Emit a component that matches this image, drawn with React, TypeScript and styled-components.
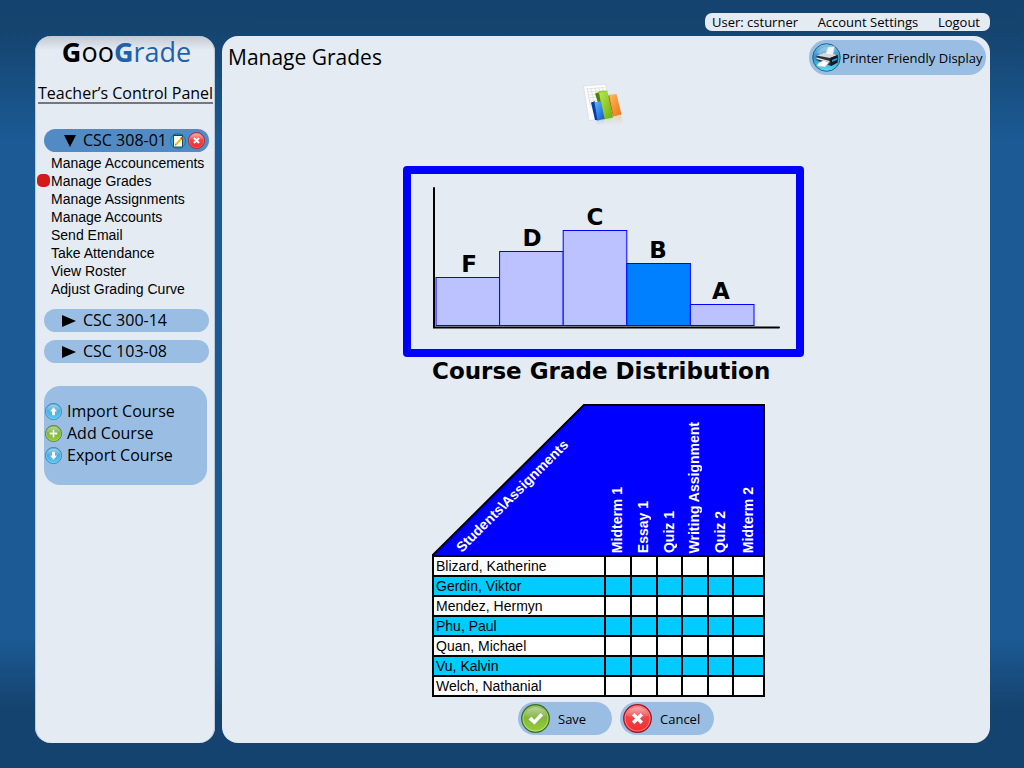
import React from "react";
import styled, { createGlobalStyle } from "styled-components";

const GlobalStyle = createGlobalStyle`
  * { box-sizing: border-box; }
  body {
    margin: 0;
    color: #000;
    font-family: "Open Sans", "Noto Sans", sans-serif;
    background: #15436f;
  }
  a { color: inherit; text-decoration: none; }
  button {
    margin: 0;
    padding: 0;
    border: 0;
    background: none;
    color: inherit;
    font: inherit;
    cursor: pointer;
  }
  svg { display: block; flex: none; }
`;

const Page = styled.div`
  display: flex;
  flex-direction: column;
  gap: 5px;
  min-height: 100vh;
  padding: 13px 34px 25px 35px;
  background: linear-gradient(
    to bottom,
    #15436f 0,
    #15446f 30px,
    #1b5a94 140px,
    #1b5a94 calc(100% - 130px),
    #15436f calc(100% - 60px)
  );
`;

const UserBar = styled.nav`
  display: flex;
  align-self: flex-end;
  justify-content: space-between;
  align-items: center;
  width: 285px;
  height: 18px;
  padding: 0 10px 0 7px;
  border-radius: 7px;
  background: #e5ebf3;
  font-size: 13px;
  line-height: 18px;
`;

const Columns = styled.div`
  display: flex;
  flex: 1;
  gap: 7px;
`;

const Sidebar = styled.aside`
  flex: none;
  width: 180px;
  padding: 0 6px 16px 9px;
  border-radius: 16px;
  background: linear-gradient(to bottom, #c4c9d1 0, #e5ebf3 14px);
  box-shadow: inset 1px 0 #b9c9dc, inset -1px 0 #b9c9dc;
`;

const Logo = styled.div`
  height: 34px;
  font-size: 27px;
  line-height: 32px;
  text-align: center;
`;

const LogoTail = styled.span`
  color: #1f62a8;
`;

const PanelTitle = styled.h2`
  width: max-content;
  margin: 15px -6px 25px;
  border-bottom: 2px solid #75777d;
  font-size: 16px;
  font-weight: 400;
  line-height: 17px;
`;

const CoursePill = styled.div<{ $open?: boolean }>`
  display: flex;
  align-items: center;
  gap: 2px;
  height: 23px;
  margin-bottom: ${(p) => (p.$open ? "2px" : "8px")};
  padding: 0 4px 0 18px;
  border-radius: 12px;
  background: ${(p) => (p.$open ? "#528bc4" : "#9abee3")};
`;

const CourseToggle = styled.button`
  display: flex;
  flex: 1;
  align-items: center;
  gap: 7px;
  font-size: 16px;
  line-height: 23px;
  white-space: nowrap;
`;

const CourseMenu = styled.ul`
  margin: 0 0 11px;
  padding: 0 0 0 7px;
  list-style: none;
  font-family: "Liberation Sans", Arial, sans-serif;
  font-size: 14px;
  line-height: 18px;
  white-space: nowrap;
`;

const CourseMenuItem = styled.li<{ $current: boolean }>`
  position: relative;
  &::before {
    content: "";
    display: ${(p) => (p.$current ? "block" : "none")};
    position: absolute;
    top: 2px;
    left: -14px;
    width: 13px;
    height: 13px;
    border-radius: 5px;
    background: #d41a1a;
  }
`;

const ActionBox = styled.div`
  display: flex;
  flex-direction: column;
  align-items: flex-start;
  height: 99px;
  margin: 23px 2px 0 0;
  padding: 14px 1px;
  border-radius: 16px;
  background: #9abee3;
`;

const ActionButton = styled.button`
  display: flex;
  align-items: center;
  gap: 5px;
  height: 22px;
  font-size: 16px;
  line-height: 22px;
`;

const Main = styled.main`
  flex: 1;
  padding: 4px 4px 8px 6px;
  border-radius: 16px;
  background: #e5ebf3;
`;

const MainHeader = styled.header`
  display: flex;
  justify-content: space-between;
  height: 35px;
`;

const Title = styled.h1`
  margin: 0;
  font-size: 21px;
  font-weight: 400;
  line-height: 34px;
`;

const PillButton = styled.button<{ $wide?: boolean }>`
  display: flex;
  align-items: center;
  gap: ${(p) => (p.$wide ? "1px" : "8px")};
  width: ${(p) => (p.$wide ? "177px" : "94px")};
  height: ${(p) => (p.$wide ? "35px" : "33px")};
  padding-left: 3px;
  border-radius: 17px;
  background: #9abee3;
  font-size: 13px;
  line-height: 18px;
  white-space: nowrap;
`;

const Content = styled.div`
  width: 408px;
  margin: 8px auto 0;
  padding-right: 7px;
`;

const ReportIconRow = styled.div`
  display: flex;
  justify-content: center;
  margin-bottom: 33px;
`;

const ChartFigure = styled.figure`
  margin: 0;
`;

const ChartFrame = styled.div`
  border: 8px solid #0000ff;
  border-radius: 4px;
`;

const ChartCaption = styled.figcaption`
  padding-left: 29px;
  font-family: "DejaVu Sans", sans-serif;
  font-size: 23px;
  font-weight: 700;
  line-height: 28px;
  white-space: nowrap;
`;

const GradeTable = styled.table`
  width: 333px;
  margin: 19px 0 0 29px;
  border-collapse: separate;
  border-spacing: 0;
  table-layout: fixed;
  font-family: "Liberation Sans", Arial, sans-serif;
  font-size: 14px;
  line-height: 18px;
`;

const Col = styled.col<{ $width: number }>`
  width: ${(p) => p.$width}px;
`;

const CornerHead = styled.th`
  position: relative;
  height: 151px;
  padding: 0;
`;

const SlantLabel = styled.span`
  position: absolute;
  bottom: 0;
  left: 32px;
  color: #fff;
  line-height: 16px;
  white-space: nowrap;
  transform: rotate(-45deg);
  transform-origin: 0 100%;
`;

const AssignmentHead = styled.th`
  padding: 0 0 2px;
  border-top: 2px solid #000;
  background: #0000ff;
  color: #fff;
  vertical-align: bottom;
  &:last-child { border-right: 2px solid #000; }
`;

const VerticalLabel = styled.span`
  display: block;
  margin: 0 auto;
  width: 18px;
  line-height: 18px;
  text-align: left;
  white-space: nowrap;
  writing-mode: vertical-rl;
  transform: rotate(180deg);
`;

const StudentRow = styled.tr`
  background: #fff;
  &:nth-child(even) { background: #00ccff; }
  &:last-child > * { border-bottom: 2px solid #000; }
`;

const StudentName = styled.th`
  height: 20px;
  padding: 0 0 0 2px;
  border-top: 2px solid #000;
  border-left: 2px solid #000;
  font-weight: 400;
  text-align: left;
`;

const GradeCell = styled.td`
  padding: 0;
  border-top: 2px solid #000;
  border-left: 2px solid #000;
  &:last-child { border-right: 2px solid #000; }
`;

const FormActions = styled.div`
  display: flex;
  gap: 8px;
  margin: 5px 0 0 115px;
`;

const Triangle = ({ open }: { open?: boolean }) => (
  <svg width="14" height="14" viewBox="0 0 14 14" aria-hidden="true">
    <path d={open ? "M2 1h12L8 13z" : "M0 1v12l14-6z"} />
  </svg>
);

type Tone = "blue" | "green" | "red";
type Mark = "up" | "down" | "plus" | "check" | "cross";

const tones: Record<Tone, [string, string, string]> = {
  blue: ["#3f9ad2", "#58c8f5", "#2477a8"],
  green: ["#6da43a", "#96cf35", "#3f7020"],
  red: ["#f0575c", "#f52a2e", "#a01520"],
};

const marks: Record<Mark, string> = {
  up: "M14 7l6 7h-3.500v6h-5v-6H8z",
  down: "M14 21l6-7h-3.500V8h-5v6H8z",
  plus: "M12.500 7.500h3v5h5v3h-5v5h-3v-5h-5v-3h5z",
  check: "M7 15l3-3 3 3 6-6.500 2.500 2.500L13 20z",
  cross: "M8.500 11l2.500-2.500 3 3 3-3 2.500 2.500-3 3 3 3-2.500 2.500-3-3-3 3L8.500 17l3-3z",
};

const RoundIcon = ({ tone, mark, size }: { tone: Tone; mark: Mark; size: number }) => {
  const id = `${tone}-${mark}-${size}`;
  const [top, bottom, edge] = tones[tone];
  return (
    <svg width={size} height={size} viewBox="0 0 28 28" aria-hidden="true">
      <defs>
        <linearGradient id={id} x1="0" y1="0" x2="0" y2="1">
          <stop offset="0" stopColor={top} />
          <stop offset="1" stopColor={bottom} />
        </linearGradient>
        <linearGradient id={`${id}-shine`} x1="0" y1="0" x2="0" y2="1">
          <stop offset="0" stopColor="#fff" stopOpacity="0.5" />
          <stop offset="1" stopColor="#fff" stopOpacity="0.05" />
        </linearGradient>
      </defs>
      <circle cx="14" cy="14" r="13.300" fill={`url(#${id})`} stroke={edge} strokeWidth="1.200" />
      <circle cx="14" cy="14" r="12" fill="none" stroke="#fff" strokeOpacity="0.35" />
      <path d="M3 11A11.500 11.500 0 0 1 25 11Q14 16 3 11z" fill={`url(#${id}-shine)`} />
      <path d={marks[mark]} fill="#fff" stroke={edge} strokeOpacity="0.3" strokeWidth="0.600" />
    </svg>
  );
};

const EditIcon = () => (
  <svg width="16" height="16" viewBox="0 0 16 16" aria-hidden="true">
    <circle cx="8" cy="8" r="7.500" fill="#35a4c9" stroke="#1c6b93" strokeWidth="0.800" />
    <path d="M3.500 2.500h9v11.500h-9z" fill="#fbfdf0" stroke="#1c4d66" />
    <path d="M3.500 2.200h9" stroke="#23343c" strokeWidth="1.400" strokeDasharray="1 0.700" />
    <path d="M6 11.500L11.500 5.500" stroke="#f0c320" strokeWidth="2.200" />
    <path d="M11 6l1.500-1.600" stroke="#d4472c" strokeWidth="2.200" />
    <path d="M5 12.500l1.500-.400-1-1z" fill="#333" />
  </svg>
);

const PrinterIcon = () => (
  <svg width="29" height="29" viewBox="0 0 29 29" aria-hidden="true">
    <defs>
      <linearGradient id="printer-disc" x1="0" y1="0" x2="0" y2="1">
        <stop offset="0" stopColor="#8cc5ea" />
        <stop offset="0.500" stopColor="#2b92cc" />
        <stop offset="1" stopColor="#5be0f5" />
      </linearGradient>
    </defs>
    <circle cx="14.500" cy="14.500" r="13.800" fill="url(#printer-disc)" stroke="#1f6180" />
    <path d="M5 10a11 11 0 0 1 18-2L14 13z" fill="#fff" opacity="0.250" />
    <path d="M4.500 12.500L14 9l11.500 3v7.500L19 23 4.500 17z" fill="#2c3238" />
    <path d="M4.500 12.500L14 9l11.500 3L18 15z" fill="#d3d9de" />
    <path d="M18 15l7.500-3v7.500L19 23z" fill="#15191e" />
    <path d="M20 17l5-2v2l-5 2z" fill="#3d8fd0" />
    <path d="M13.500 11.500L16 4l6.500-.500-1.500 8.500z" fill="#f2f5f7" stroke="#b9c4cc" strokeWidth="0.500" />
    <path d="M4.500 14.500l13 3.500v1.500l-13-3.500z" fill="#e3e8ec" />
    <path d="M6.500 20l5-2.500 5.500 2-4 4.500-8-1z" fill="#fff" stroke="#aeb8c0" strokeWidth="0.500" />
  </svg>
);

const ReportIcon = () => (
  <svg width="42" height="50" viewBox="0 0 42 50" aria-hidden="true">
    <defs>
      <linearGradient id="bar-blue" x1="0" y1="0" x2="1" y2="1">
        <stop offset="0" stopColor="#61b9fa" />
        <stop offset="1" stopColor="#0a55d8" />
      </linearGradient>
      <linearGradient id="bar-green" x1="0" y1="0" x2="1" y2="1">
        <stop offset="0" stopColor="#b9ea4c" />
        <stop offset="1" stopColor="#6cab0c" />
      </linearGradient>
      <linearGradient id="bar-orange" x1="0" y1="0" x2="1" y2="1">
        <stop offset="0" stopColor="#ffba62" />
        <stop offset="1" stopColor="#ee7410" />
      </linearGradient>
      <linearGradient id="bar-fade" x1="0" y1="0" x2="0" y2="1">
        <stop offset="0" stopColor="#e5ebf3" stopOpacity="0.600" />
        <stop offset="0.700" stopColor="#e5ebf3" />
      </linearGradient>
    </defs>
    <path d="M0.500 3L22.500 1.200 29 35 6 37.500z" fill="#fdfdfd" stroke="#d3d7dc" strokeWidth="0.600" />
    <path
      d="M3.500 6l18-1.500M4 9l18-1.500M4.500 12l18-1.500M5 15l18-1.500M5.500 18l18-1.500M6 21l17-1.500M4 5l4 20M8 5l4 20M12 4.500l4 20M16 4.500l4 20M19.500 4l3 17"
      fill="none"
      stroke="#d9ddd5"
      strokeWidth="0.700"
    />
    <path d="M13 37l8-1 1 7-8 2z" fill="#4388e0" />
    <path d="M21 36l9-2 1 8-9 1z" fill="#9ccc50" />
    <path d="M30 34l8-2 2 8-9 2z" fill="#f5a860" />
    <path d="M11 31h31v16H11z" fill="url(#bar-fade)" />
    <path d="M24.500 13l3-1.500 4.500 21-2 1z" fill="#b5530a" />
    <path d="M26 12l7.500-1 5 20.500-8 2z" fill="url(#bar-orange)" />
    <path d="M12 10.500l5-1.500 6 26.500-3 .500z" fill="#4d8208" />
    <path d="M16 9.500l8.500-1 5.500 26-9 2z" fill="url(#bar-green)" />
    <path d="M12 10.500l4.500-2.500 8-.500-.500 1.500-8 1z" fill="#9ccb35" />
    <path d="M8 19.500l4-1.200 3.500 19-3.500-.300z" fill="#063f9e" />
    <path d="M11.500 19l6.500-.500 3.500 17.500-7 1.500z" fill="url(#bar-blue)" />
  </svg>
);

const bars = [
  { grade: "F", height: 48 },
  { grade: "D", height: 74 },
  { grade: "C", height: 95 },
  { grade: "B", height: 62, current: true },
  { grade: "A", height: 21 },
];

const GradeChart = () => (
  <svg
    width="385"
    height="175"
    viewBox="0 0 385 175"
    role="img"
    aria-label="Course grade distribution"
    fontFamily="DejaVu Sans, sans-serif"
    fontSize="23"
    fontWeight="700"
    textAnchor="middle"
  >
    <path d="M23 14V153.500H368" fill="none" stroke="#000" strokeWidth="2" strokeLinecap="round" />
    {bars.map((bar, i) => (
      <g key={bar.grade}>
        <rect
          x={25 + i * 63.6}
          y={151.5 - bar.height}
          width={63.6}
          height={bar.height}
          fill={bar.current ? "#0080ff" : "#bcc2ff"}
          stroke="#0000ff"
          strokeWidth="1"
        />
        <text x={58 + i * 63} y={146 - bar.height}>{bar.grade}</text>
      </g>
    ))}
  </svg>
);

const menu = [
  "Manage Accouncements",
  "Manage Grades",
  "Manage Assignments",
  "Manage Accounts",
  "Send Email",
  "Take Attendance",
  "View Roster",
  "Adjust Grading Curve",
];

const actions: { label: string; tone: Tone; mark: Mark }[] = [
  { label: "Import Course", tone: "blue", mark: "up" },
  { label: "Add Course", tone: "green", mark: "plus" },
  { label: "Export Course", tone: "blue", mark: "down" },
];

const assignments = ["Midterm 1", "Essay 1", "Quiz 1", "Writing Assignment", "Quiz 2", "Midterm 2"];
const columnWidths = [172, 26, 26, 25, 26, 25, 33];

const students = [
  "Blizard, Katherine",
  "Gerdin, Viktor",
  "Mendez, Hermyn",
  "Phu, Paul",
  "Quan, Michael",
  "Vu, Kalvin",
  "Welch, Nathanial",
];

export default function App() {
  return (
    <>
      <GlobalStyle />
      <Page>
        <UserBar>
          <span>User: csturner</span>
          <a href="#settings">Account Settings</a>
          <a href="#logout">Logout</a>
        </UserBar>
        <Columns>
          <Sidebar>
            <Logo>
              <b>G</b>oo<LogoTail><b>G</b>rade</LogoTail>
            </Logo>
            <PanelTitle>Teacher’s Control Panel</PanelTitle>
            <nav>
              <CoursePill $open>
                <CourseToggle aria-expanded="true"><Triangle open />CSC 308-01</CourseToggle>
                <button aria-label="Edit course"><EditIcon /></button>
                <button aria-label="Delete course"><RoundIcon tone="red" mark="cross" size={17} /></button>
              </CoursePill>
              <CourseMenu>
                {menu.map((item) => (
                  <CourseMenuItem key={item} $current={item === "Manage Grades"}>
                    <a href="#course">{item}</a>
                  </CourseMenuItem>
                ))}
              </CourseMenu>
              {["CSC 300-14", "CSC 103-08"].map((course) => (
                <CoursePill key={course}>
                  <CourseToggle aria-expanded="false"><Triangle />{course}</CourseToggle>
                </CoursePill>
              ))}
            </nav>
            <ActionBox>
              {actions.map((a) => (
                <ActionButton key={a.label}>
                  <RoundIcon tone={a.tone} mark={a.mark} size={17} />
                  {a.label}
                </ActionButton>
              ))}
            </ActionBox>
          </Sidebar>
          <Main>
            <MainHeader>
              <Title>Manage Grades</Title>
              <PillButton $wide>
                <PrinterIcon />
                Printer Friendly Display
              </PillButton>
            </MainHeader>
            <Content>
              <ReportIconRow><ReportIcon /></ReportIconRow>
              <ChartFigure>
                <ChartFrame><GradeChart /></ChartFrame>
                <ChartCaption>Course Grade Distribution</ChartCaption>
              </ChartFigure>
              <GradeTable>
                <colgroup>
                  {columnWidths.map((w, i) => <Col key={i} $width={w} />)}
                </colgroup>
                <thead>
                  <tr>
                    <CornerHead scope="col">
                      <svg width="172" height="151" viewBox="0 0 172 151" aria-hidden="true">
                        <path d="M0 151L152 0H172V151z" fill="#0000ff" />
                        <path d="M0 152L152 1H172" fill="none" stroke="#000" strokeWidth="2" />
                      </svg>
                      <SlantLabel>Students\Assignments</SlantLabel>
                    </CornerHead>
                    {assignments.map((a) => (
                      <AssignmentHead key={a} scope="col"><VerticalLabel>{a}</VerticalLabel></AssignmentHead>
                    ))}
                  </tr>
                </thead>
                <tbody>
                  {students.map((s) => (
                    <StudentRow key={s}>
                      <StudentName scope="row">{s}</StudentName>
                      {assignments.map((a) => <GradeCell key={a} />)}
                    </StudentRow>
                  ))}
                </tbody>
              </GradeTable>
              <FormActions>
                <PillButton><RoundIcon tone="green" mark="check" size={29} />Save</PillButton>
                <PillButton><RoundIcon tone="red" mark="cross" size={29} />Cancel</PillButton>
              </FormActions>
            </Content>
          </Main>
        </Columns>
      </Page>
    </>
  );
}
